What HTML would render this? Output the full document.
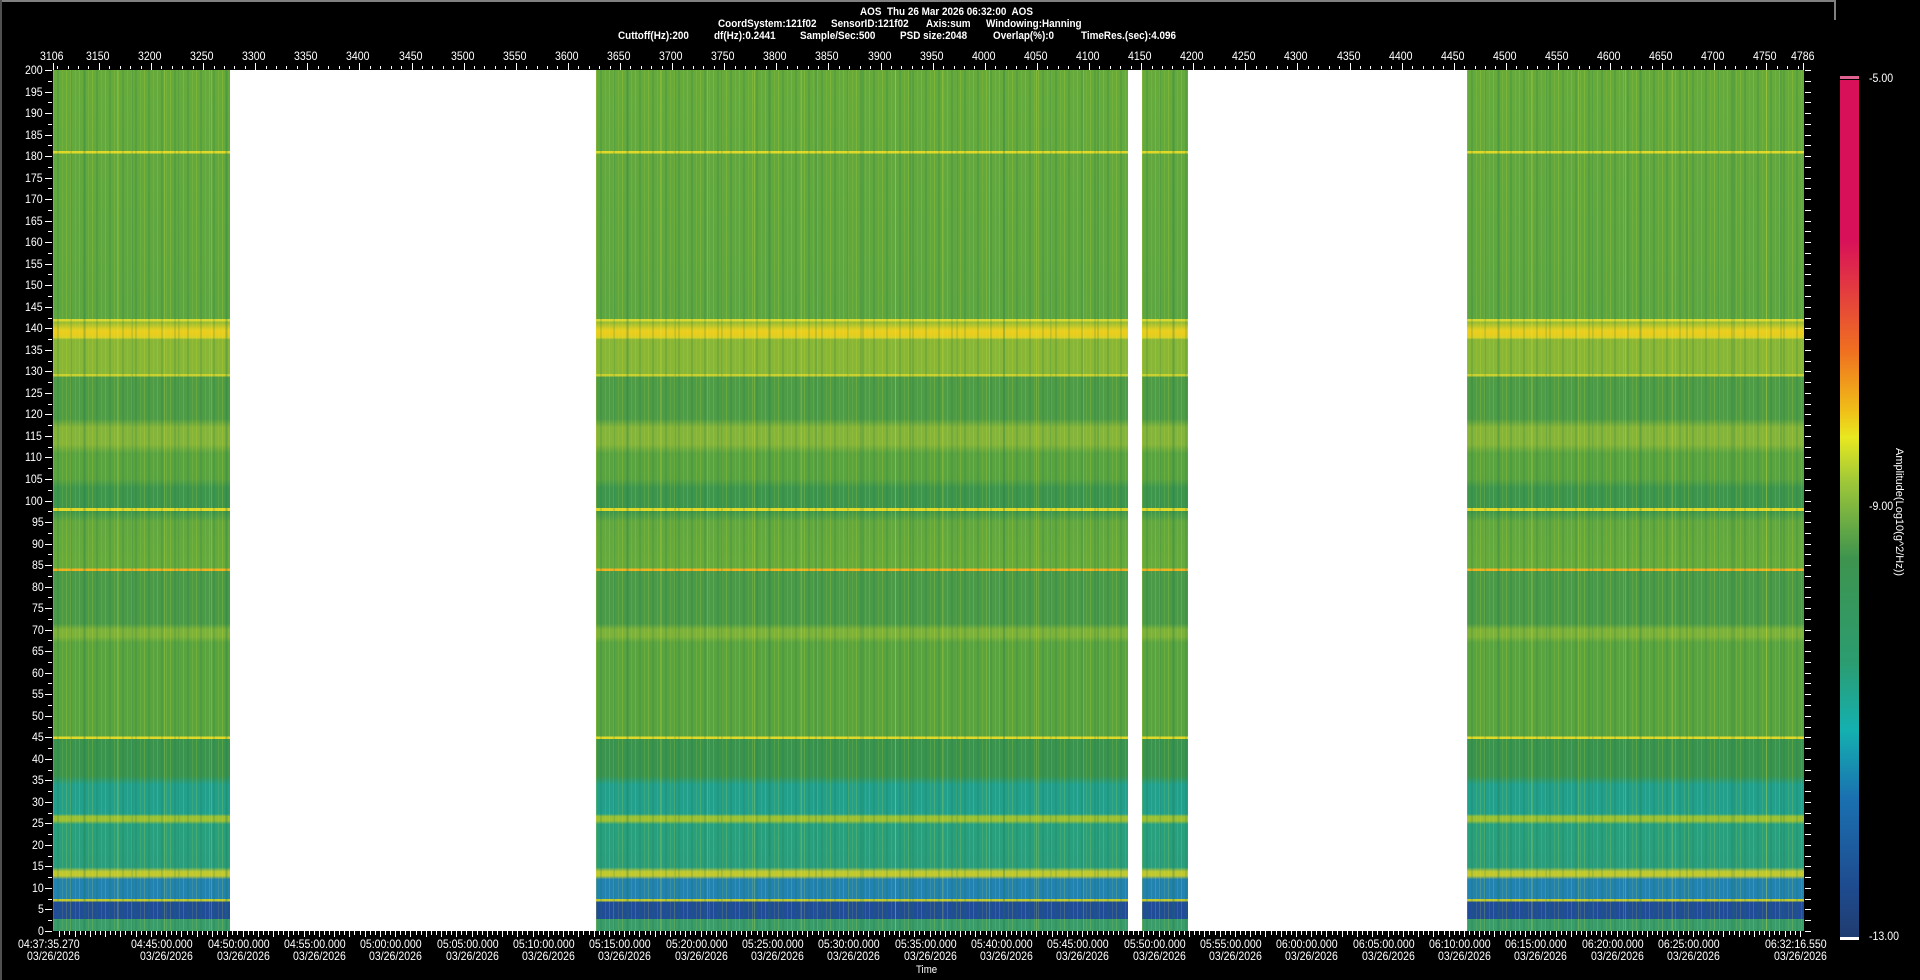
<!DOCTYPE html>
<html><head><meta charset="utf-8"><style>
html,body{margin:0;padding:0;background:#000;width:1920px;height:980px;overflow:hidden;position:relative;font-family:"Liberation Sans",sans-serif;color:#fff}
.t{position:absolute;white-space:nowrap;font-size:12px;line-height:12px;transform:scaleX(.88);transform-origin:left top}
.h{position:absolute;white-space:nowrap;font-size:11px;line-height:11px;font-weight:bold;transform:scaleX(.9);transform-origin:left top}
#plot{position:absolute;left:53px;top:70px;width:1751px;height:861px;background:#fff}
.seg{position:absolute;top:0;height:861px;
background:
repeating-linear-gradient(90deg,rgba(230,230,40,.18) 0 1px,transparent 1px 4px,rgba(20,110,70,.16) 4px 6px,transparent 6px 9px,rgba(220,230,60,.12) 9px 10px,transparent 10px 13px),
repeating-linear-gradient(90deg,transparent 0 17px,rgba(240,240,60,.22) 17px 18px,transparent 18px 31px,rgba(30,120,80,.18) 31px 33px,transparent 33px 47px),
linear-gradient(180deg,
#66aa3c 0%,#64a93d 9.4%,#e0d828 9.4%,#e0d828 9.7%,#62a83e 9.7%,#5ea640 28.9%,
#d8d830 28.9%,#d8d830 29.2%,#8cb836 29.2%,#e6d020 30.2%,#eccc1c 30.6%,#d8d026 31.1%,#88b636 31.3%,#88b636 35.3%,
#c8d030 35.3%,#c8d030 35.6%,#4e9c46 35.6%,#4e9c46 40.5%,#84b43a 41.5%,#84b43a 43.5%,#5aa440 44.5%,#5aa440 47.5%,#3e964c 48.5%,#3e964c 50.9%,
#e0d828 50.9%,#e0d828 51.2%,#3e964c 51.2%,#62a83e 52.5%,#66aa3c 57.9%,#f0b020 57.9%,#f0b020 58.2%,#4a9a48 58.2%,#4a9a48 64.3%,#7cb23a 65%,#7cb23a 65.8%,
#5aa440 66.5%,#5aa440 77.4%,#e0d828 77.4%,#e0d828 77.7%,#3a944e 77.7%,#3a944e 82%,#22a08c 83%,#22a08c 86.4%,
#9cc034 86.7%,#9cc034 87.2%,#28a07e 87.6%,#2a9e7c 92.6%,#c0c830 93.1%,#c0c830 93.6%,#2282b0 94%,#2282b0 96.3%,
#c0c830 96.3%,#c0c830 96.6%,#204c98 96.6%,#204c98 98.6%,#3a9c68 98.6%,#3a9c68 100%)}
#cbar{position:absolute;left:1840px;top:76px;width:19px;height:861px;background:linear-gradient(180deg,#e06090 0,#e06090 3px,#000 3px,#000 4px,#d8105a 4px,#d8105a 19%,#f07020 32%,#f0c018 39%,#e8e820 42%,#a0c838 47%,#3e944e 56%,#2c9c70 68%,#14b0b0 76%,#1a70b0 84%,#1e4c90 94%,#203c70 100%)}
</style></head><body>
<div style="position:absolute;left:0;top:0;width:1834px;height:2px;background:#808080"></div>
<div style="position:absolute;left:1834px;top:0;width:2px;height:20px;background:#808080"></div>
<div style="position:absolute;left:0;top:0;width:2px;height:980px;background:#505050"></div>

<div class="h" style="left:860px;top:7px">AOS&nbsp; Thu 26 Mar 2026 06:32:00&nbsp; AOS</div>
<div class="h" style="left:718px;top:19px">CoordSystem:121f02</div>
<div class="h" style="left:831px;top:19px">SensorID:121f02</div>
<div class="h" style="left:926px;top:19px">Axis:sum</div>
<div class="h" style="left:986px;top:19px">Windowing:Hanning</div>
<div class="h" style="left:618px;top:31px">Cuttoff(Hz):200</div>
<div class="h" style="left:714px;top:31px">df(Hz):0.2441</div>
<div class="h" style="left:800px;top:31px">Sample/Sec:500</div>
<div class="h" style="left:900px;top:31px">PSD size:2048</div>
<div class="h" style="left:993px;top:31px">Overlap(%):0</div>
<div class="h" style="left:1081px;top:31px">TimeRes.(sec):4.096</div>

<div id="plot">
<div class="seg" style="left:0;width:177px"></div>
<div class="seg" style="left:543px;width:532px"></div>
<div class="seg" style="left:1089px;width:46px"></div>
<div class="seg" style="left:1414px;width:337px"></div>
</div>
<div id="ax"></div>
<div id="cbar"></div>
<div style="position:absolute;left:1840px;top:937px;width:19px;height:3px;background:#fff"></div>
<div class="t" style="left:1869px;top:72px">-5.00</div>
<div class="t" style="left:1869px;top:500px">-9.00</div>
<div class="t" style="left:1869px;top:930px">-13.00</div>
<div class="t" style="left:1905px;top:448px;transform:rotate(90deg);transform-origin:left top;font-size:11px">Amplitude(Log10(g^2/Hz))</div>
<div class="t" style="left:916px;top:964px;font-size:11px">Time</div>
<script>
var ax=document.getElementById('ax'),h='';
var L=53,R=1804,T=70,B=931,W=R-L,H=B-T;
function xv(v){return L+(v-3106)*W/1680;}
for(var v=3110;v<=4786;v+=10){var x=xv(v),big=v%50==0;h+='<div style="position:absolute;left:'+Math.round(x)+'px;top:'+(big?63:66)+'px;width:1px;height:'+(big?7:3)+'px;background:#fff"></div>';}
h+='<div style="position:absolute;left:53px;top:63px;width:1px;height:7px;background:#fff"></div><div style="position:absolute;left:1803px;top:63px;width:1px;height:7px;background:#fff"></div>';
var lab=[3106];for(var v=3150;v<=4750;v+=50)lab.push(v);lab.push(4786);
lab.forEach(function(v){var x=xv(v);h+='<div class="t" style="left:'+Math.round(x-13)+'px;top:50px">'+v+'</div>';});
for(var f=0;f<=200;f+=2.5){var y=B-f*H/200,big=f%5==0;
h+='<div style="position:absolute;left:'+(big?45:48)+'px;top:'+Math.round(y)+'px;width:'+(big?7:4)+'px;height:1px;background:#fff"></div>';
h+='<div style="position:absolute;left:'+(R+1)+'px;top:'+Math.round(y)+'px;width:6px;height:1px;background:#fff"></div>';
if(big){var s=''+f;h+='<div class="t" style="left:'+(44-s.length*6.2)+'px;top:'+Math.round(y-6)+'px">'+s+'</div>';}}
var pps=W/6881.28;
for(var s=144.73-60*2;s<6881;s+=20){if(s<0)continue;var x=L+s*pps,big=Math.abs(((s-144.73)%60+60)%60)<1;h+='<div style="position:absolute;left:'+Math.round(x)+'px;top:931px;width:1px;height:'+(big?6:4)+'px;background:#fff"></div>';}
var ts=['04:45:00.000','04:50:00.000','04:55:00.000','05:00:00.000','05:05:00.000','05:10:00.000','05:15:00.000','05:20:00.000','05:25:00.000','05:30:00.000','05:35:00.000','05:40:00.000','05:45:00.000','05:50:00.000','05:55:00.000','06:00:00.000','06:05:00.000','06:10:00.000','06:15:00.000','06:20:00.000','06:25:00.000'];
function tl(x,t){h+='<div class="t" style="left:'+Math.round(x-35)+'px;top:938px">'+t+'</div><div class="t" style="left:'+Math.round(x-26)+'px;top:950px">03/26/2026</div>';}
tl(L,'04:37:35.270');
ts.forEach(function(t,i){tl(L+(444.73+300*i)*pps,t);});
tl(R-4,'06:32:16.550');
ax.innerHTML=h;
</script>
</body></html>
